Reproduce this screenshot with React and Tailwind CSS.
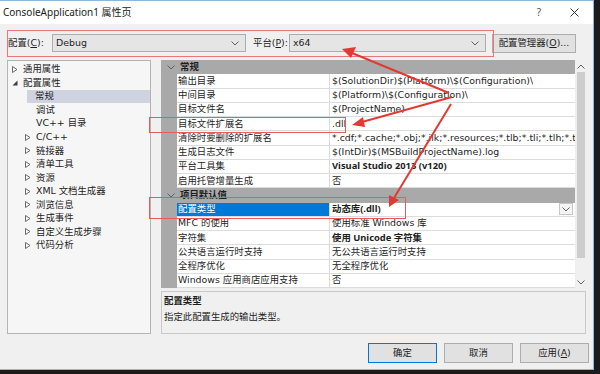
import React from 'react';

const tree = [
    { label: '通用属性', level: 0, arrow: 'closed' },
    { label: '配置属性', level: 0, arrow: 'open' },
    { label: '常规', level: 1, selected: true },
    { label: '调试', level: 1 },
    { label: 'VC++ 目录', level: 1 },
    { label: 'C/C++', level: 1, arrow: 'closed' },
    { label: '链接器', level: 1, arrow: 'closed' },
    { label: '清单工具', level: 1, arrow: 'closed' },
    { label: '资源', level: 1, arrow: 'closed' },
    { label: 'XML 文档生成器', level: 1, arrow: 'closed' },
    { label: '浏览信息', level: 1, arrow: 'closed' },
    { label: '生成事件', level: 1, arrow: 'closed' },
    { label: '自定义生成步骤', level: 1, arrow: 'closed' },
    { label: '代码分析', level: 1, arrow: 'closed' },
];

const rows = [
    { header: '常规' },
    { name: '输出目录', value: '$(SolutionDir)$(Platform)\\$(Configuration)\\' },
    { name: '中间目录', value: '$(Platform)\\$(Configuration)\\' },
    { name: '目标文件名', value: '$(ProjectName)' },
    { name: '目标文件扩展名', value: '.dll' },
    { name: '清除时要删除的扩展名', value: '*.cdf;*.cache;*.obj;*.ilk;*.resources;*.tlb;*.tli;*.tlh;*.tmp;*.rsp;*.pgc;*.pgd' },
    { name: '生成日志文件', value: '$(IntDir)$(MSBuildProjectName).log' },
    { name: '平台工具集', value: 'Visual Studio 2013 (v120)', bold: true },
    { name: '启用托管增量生成', value: '否' },
    { header: '项目默认值' },
    { name: '配置类型', value: '动态库(.dll)', bold: true, selected: true },
    { name: 'MFC 的使用', value: '使用标准 Windows 库' },
    { name: '字符集', value: '使用 Unicode 字符集', bold: true },
    { name: '公共语言运行时支持', value: '无公共语言运行时支持' },
    { name: '全程序优化', value: '无全程序优化' },
    { name: 'Windows 应用商店应用支持', value: '否' },
];

function Chevron({ className = '' }) {
    return (
        <svg width="8" height="5" viewBox="0 0 8 5" className={className}>
            <path d="M0.5 0.5 L4 4 L7.5 0.5" fill="none" stroke="#606060" strokeWidth="1" />
        </svg>
    );
}

function TreeArrow({ type }) {
    if (type === 'open') {
        return (
            <svg width="6" height="6" viewBox="0 0 6 6">
                <path d="M5.5 0.5 L5.5 5.5 L0.5 5.5 Z" fill="#3a3a3a" />
            </svg>
        );
    }
    return (
        <svg width="6" height="7" viewBox="0 0 6 7">
            <path d="M0.5 0.5 L5 3.5 L0.5 6.5 Z" fill="none" stroke="#5c5c5c" strokeWidth="0.9" />
        </svg>
    );
}

function Dropdown({ value, className }) {
    return (
        <div className={`h-[18px] bg-[#e5e5e5] border border-[#adadad] flex items-center justify-between pl-[3px] pr-[6px] ${className}`}>
            <span>{value}</span>
            <Chevron />
        </div>
    );
}

// red markup drawn on top of the dialog
function Annotations() {
    const red = '#e23a32';
    return (
        <svg className="absolute inset-0 pointer-events-none" width="600" height="374" viewBox="0 0 600 374">
            <rect x="7.5" y="30.5" width="486" height="26" fill="none" stroke="#e87878" strokeWidth="1" />
            <rect x="149.5" y="117.5" width="196" height="15" fill="none" stroke="#e25d5d" strokeWidth="1" />
            <rect x="149.5" y="197.5" width="256" height="21" fill="none" stroke="#e25d5d" strokeWidth="1" />
            <line x1="449" y1="93" x2="352" y2="53" stroke={red} strokeWidth="2" />
            <polygon points="342,49 356,47 351,58" fill={red} />
            <line x1="452" y1="97" x2="362" y2="122" stroke={red} strokeWidth="2" />
            <polygon points="352,125 363,117 365,127" fill={red} />
            <line x1="451" y1="104" x2="394" y2="198" stroke={red} strokeWidth="2" />
            <polygon points="389,207 389,195 399,200" fill={red} />
        </svg>
    );
}

export default function App() {
    return (
        <div className="w-[600px] h-[374px] bg-[#1b1b1b] relative overflow-hidden font-['DejaVu_Sans','Noto_Sans_CJK_SC',sans-serif] text-[#1e1e1e]">
            <div className="w-[594px] h-[370px] bg-[#f0f0f0] flex flex-col border-t border-r border-b border-[#8db6dd]">
                {/* title bar */}
                <div className="h-[23px] bg-white flex items-center pl-[3px] text-[10px] text-[#222] font-['Noto_Sans','Noto_Sans_CJK_SC',sans-serif]">
                    <span className="flex-1">ConsoleApplication1 属性页</span>
                    <span className="w-[10px] text-center mr-[26px] text-[#555]">?</span>
                    <svg width="9" height="9" viewBox="0 0 9 9" className="mr-[14px]">
                        <path d="M0.5 0.5 L8.5 8.5 M8.5 0.5 L0.5 8.5" stroke="#333" strokeWidth="1" />
                    </svg>
                </div>

                {/* configuration row */}
                <div className="h-[36px] flex items-center text-[9.4px] pl-[8px] pt-[2px]">
                    <span className="w-[44px]">配置(<span className="underline">C</span>):</span>
                    <Dropdown value="Debug" className="w-[194px]" />
                    <span className="w-[43px] pl-[7px] whitespace-nowrap">平台(<span className="underline">P</span>):</span>
                    <Dropdown value="x64" className="w-[197px]" />
                    <div className="ml-[6px] w-[84px] h-[19px] bg-[#e1e1e1] border border-[#adadad] flex items-center justify-center whitespace-nowrap">
                        配置管理器(<span className="underline">O</span>)...
                    </div>
                </div>

                {/* main area */}
                <div className="h-[274px] flex pl-[7px] gap-[10px] text-[9.4px]">
                    {/* tree */}
                    <div className="w-[144px] bg-[#f6f6f6] border border-[#b4b4b4] pt-[1.5px]">
                        {tree.map((t) => (
                            <div key={t.label} className="h-[13.55px] flex items-center">
                                {t.selected ? (
                                    <div className="h-full flex-1 ml-[19px] pl-[8px] flex items-center bg-[#cfd3df] whitespace-nowrap">
                                        {t.label}
                                    </div>
                                ) : (
                                    <div className={`h-full flex items-center ${t.level === 0 ? 'pl-[4px]' : 'pl-[17px]'}`}>
                                        <span className="w-[11px] flex items-center">{t.arrow && <TreeArrow type={t.arrow} />}</span>
                                        <span className="whitespace-nowrap">{t.label}</span>
                                    </div>
                                )}
                            </div>
                        ))}
                    </div>

                    {/* property grid + description */}
                    <div className="w-[425px] flex flex-col">
                        <div className="h-[228px] flex">
                            <div className="w-[414px] flex flex-col">
                                {rows.map((r, i) =>
                                    r.header ? (
                                        <div key={i} className="h-[14.25px] bg-[#a9a9a9] flex items-center">
                                            <span className="w-[19px] flex justify-center"><Chevron /></span>
                                            <span className="font-bold">{r.header}</span>
                                        </div>
                                    ) : (
                                        <div key={i} className="h-[14.25px] flex bg-[#a9a9a9]">
                                            <div className="w-[16px]" />
                                            <div className={`w-[153px] pl-[1px] flex items-center border-r border-b border-[#dcdcdc] whitespace-nowrap overflow-hidden ${r.selected ? 'bg-[#0078d7] text-white' : 'bg-white'}`}>
                                                {r.name}
                                            </div>
                                            <div className={`flex-1 pl-[2px] flex items-center justify-between bg-white border-b border-[#dcdcdc] whitespace-nowrap overflow-hidden ${r.bold ? "font-bold font-['Noto_Sans','Noto_Sans_CJK_SC',sans-serif]" : ''}`}>
                                                <span className="overflow-hidden">{r.value}</span>
                                                {r.selected && (
                                                    <span className="w-[14px] h-[12px] mr-[2px] border border-[#c8c8c8] flex items-center justify-center bg-[#f4f4f4]">
                                                        <Chevron />
                                                    </span>
                                                )}
                                            </div>
                                        </div>
                                    )
                                )}
                            </div>
                            {/* scrollbar */}
                            <div className="w-[11px] bg-[#f0f0f0] flex flex-col items-center">
                                <div className="h-[12px] flex items-center">
                                    <Chevron className="rotate-180" />
                                </div>
                                <div className="w-[8px] h-[186px] bg-[#cdcdcd]" />
                                <div className="flex-1" />
                                <div className="h-[12px] flex items-center">
                                    <Chevron />
                                </div>
                            </div>
                        </div>
                        <div className="mt-[3px] h-[43px] border border-[#c9c9c9] px-[2px] pt-[2px] flex flex-col gap-[2px]">
                            <span className="font-bold">配置类型</span>
                            <span>指定此配置生成的输出类型。</span>
                        </div>
                    </div>
                </div>

                {/* buttons */}
                <div className="flex justify-end gap-[7px] pr-[4px] pt-[9px] text-[9.4px]">
                    <div className="w-[69px] h-[20px] bg-[#e1e1e1] border border-[#0078d7] flex items-center justify-center">确定</div>
                    <div className="w-[69px] h-[20px] bg-[#e1e1e1] border border-[#adadad] flex items-center justify-center">取消</div>
                    <div className="w-[69px] h-[20px] bg-[#e1e1e1] border border-[#adadad] flex items-center justify-center">应用(<span className="underline">A</span>)</div>
                </div>
            </div>
            <Annotations />
        </div>
    );
}
